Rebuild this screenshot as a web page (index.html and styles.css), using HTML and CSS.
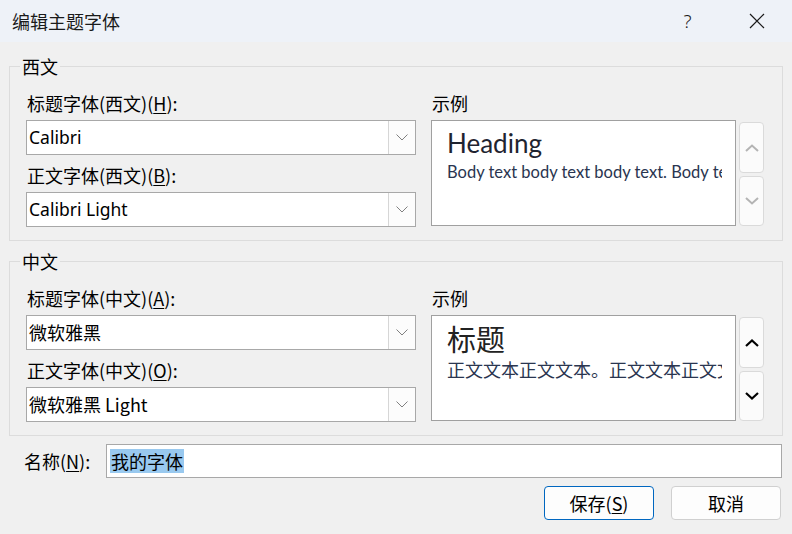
FILE: index.html
```html
<!DOCTYPE html>
<html lang="zh-CN">
<head>
  <meta charset="UTF-8">
  <meta name="viewport" content="width=device-width, initial-scale=1.0">
  <link rel="stylesheet" href="styles.css">
  <title>编辑主题字体</title>
</head>
<body>
  <div class="dialog">
    <div class="titlebar">
      <div class="title">编辑主题字体</div>
      <div class="caption-btn help">?</div>
      <div class="caption-btn close">
        <svg width="16" height="16" viewBox="0 0 16 16"><path d="M1 1 L15 15 M15 1 L1 15" stroke="#1a1a1a" stroke-width="1.2" fill="none"/></svg>
      </div>
    </div>

    <fieldset class="group">
      <legend>西文</legend>
      <div class="fields">
        <div class="field">
          <div class="label">标题字体(西文)(<u>H</u>):</div>
          <div class="combo">
            <div class="combo-text latin">Calibri</div>
            <div class="combo-btn"><svg width="12" height="7" viewBox="0 0 12 7"><path d="M0.5 0.5 L6 6 L11.5 0.5" stroke="#808080" stroke-width="1" fill="none"/></svg></div>
          </div>
        </div>
        <div class="field">
          <div class="label">正文字体(西文)(<u>B</u>):</div>
          <div class="combo">
            <div class="combo-text latin">Calibri Light</div>
            <div class="combo-btn"><svg width="12" height="7" viewBox="0 0 12 7"><path d="M0.5 0.5 L6 6 L11.5 0.5" stroke="#808080" stroke-width="1" fill="none"/></svg></div>
          </div>
        </div>
      </div>
      <div class="sample">
        <div class="label">示例</div>
        <div class="sample-row">
          <div class="preview">
            <div class="pv-head latin-head">Heading</div>
            <div class="pv-body latin-body">Body text body text body text. Body text body text.</div>
          </div>
          <div class="spin">
            <div class="spin-btn"><svg width="14" height="8" viewBox="0 0 14 8"><path d="M1 7 L7 1.5 L13 7" stroke="#b4b4b4" stroke-width="2" fill="none"/></svg></div>
            <div class="spin-btn"><svg width="14" height="8" viewBox="0 0 14 8"><path d="M1 1 L7 6.5 L13 1" stroke="#b4b4b4" stroke-width="2" fill="none"/></svg></div>
          </div>
        </div>
      </div>
    </fieldset>

    <fieldset class="group group-cn">
      <legend>中文</legend>
      <div class="fields">
        <div class="field">
          <div class="label">标题字体(中文)(<u>A</u>):</div>
          <div class="combo">
            <div class="combo-text">微软雅黑</div>
            <div class="combo-btn"><svg width="12" height="7" viewBox="0 0 12 7"><path d="M0.5 0.5 L6 6 L11.5 0.5" stroke="#808080" stroke-width="1" fill="none"/></svg></div>
          </div>
        </div>
        <div class="field">
          <div class="label">正文字体(中文)(<u>O</u>):</div>
          <div class="combo">
            <div class="combo-text">微软雅黑 Light</div>
            <div class="combo-btn"><svg width="12" height="7" viewBox="0 0 12 7"><path d="M0.5 0.5 L6 6 L11.5 0.5" stroke="#808080" stroke-width="1" fill="none"/></svg></div>
          </div>
        </div>
      </div>
      <div class="sample">
        <div class="label">示例</div>
        <div class="sample-row">
          <div class="preview">
            <div class="pv-head cn-head">标题</div>
            <div class="pv-body cn-body">正文文本正文文本。正文文本正文文本。</div>
          </div>
          <div class="spin">
            <div class="spin-btn"><svg width="14" height="8" viewBox="0 0 14 8"><path d="M1 7 L7 1.5 L13 7" stroke="#000" stroke-width="2.2" fill="none"/></svg></div>
            <div class="spin-btn"><svg width="14" height="8" viewBox="0 0 14 8"><path d="M1 1 L7 6.5 L13 1" stroke="#000" stroke-width="2.2" fill="none"/></svg></div>
          </div>
        </div>
      </div>
    </fieldset>

    <div class="name-row">
      <div class="name-label">名称(<u>N</u>):</div>
      <div class="name-input"><span class="selected">我的字体</span></div>
    </div>

    <div class="buttons">
      <div class="btn btn-default">保存(<u>S</u>)</div>
      <div class="btn">取消</div>
    </div>
  </div>
</body>
</html>
```

FILE: styles.css
```css
* {
  margin: 0;
  padding: 0;
  box-sizing: border-box;
}

body {
  background-color: #f0f0f0;
  font-family: "Noto Sans CJK SC", sans-serif;
  font-size: 18px;
  color: #000;
}

.dialog {
  width: 792px;
  height: 534px;
  overflow: hidden;
}

u {
  text-decoration-thickness: 1px;
  text-underline-offset: 2px;
}

/* title bar */
.titlebar {
  display: flex;
  align-items: center;
  height: 42px;
  background-color: #eef2f8;
}

.title {
  flex: 1;
  padding-left: 12px;
  line-height: 24px;
  color: #1a1a1a;
}

.caption-btn {
  width: 70px;
  height: 42px;
  display: flex;
  align-items: center;
  justify-content: center;
  color: #1a1a1a;
}

.help {
  font-family: "Noto Sans", sans-serif;
  font-weight: 300;
  font-size: 19px;
  padding-left: 1px;
}

.close {
  padding-right: 1px;
}

/* groups */
.group {
  margin: 12px 9px 0 9px;
  border: 1px solid #dcdcdc;
  padding: 13px 18px 13px 16px;
  display: grid;
  grid-template-columns: 390px 333px;
  column-gap: 15px;
}

.group-cn {
  margin-top: 8px;
}

legend {
  margin-left: -6px;
  padding: 0 2px;
  line-height: 24px;
  font-size: 18px;
}

.fields {
  display: flex;
  flex-direction: column;
  gap: 8px;
}

.label {
  line-height: 24px;
  margin-bottom: 5px;
  padding-left: 1px;
  white-space: nowrap;
}

.combo {
  display: flex;
  height: 35px;
  border: 1px solid #a8a8a8;
  background-color: #fff;
}

.combo-text {
  flex: 1;
  padding-left: 2px;
  line-height: 33px;
  white-space: nowrap;
}

.combo-text.latin {
  font-family: "Noto Sans", sans-serif;
  font-size: 17.5px;
}

.combo-btn {
  width: 27px;
  display: flex;
  align-items: center;
  justify-content: center;
  background-color: #fcfcfc;
  border-left: 1px solid #d6d6d6;
}

/* sample preview */
.sample-row {
  display: flex;
  gap: 3px;
}

.preview {
  width: 305px;
  height: 106px;
  border: 1px solid #a0a0a0;
  background-color: #fff;
  padding: 6px 13px 0 15px;
  overflow: hidden;
}

.pv-head,
.pv-body {
  white-space: nowrap;
  overflow: hidden;
}

.latin-head {
  font-family: Lato, sans-serif;
  font-size: 26px;
  line-height: 32px;
  color: #1f2430;
}

.latin-body {
  font-family: Lato, sans-serif;
  font-size: 16.5px;
  line-height: 20px;
  margin-top: 3px;
  color: #2a3550;
}

.cn-head {
  font-size: 29px;
  line-height: 34px;
  color: #222;
  margin-top: -1px;
}

.cn-body {
  font-size: 18px;
  line-height: 22px;
  margin-top: 3px;
  color: #2a3650;
}

.spin {
  display: flex;
  flex-direction: column;
  gap: 3px;
  padding-top: 2px;
}

.spin-btn {
  width: 25px;
  height: 51px;
  display: flex;
  align-items: center;
  justify-content: center;
  border: 1px solid #dadada;
  border-radius: 4px;
  background-color: #fbfbfb;
}

.spin-btn + .spin-btn {
  height: 50px;
}

/* name */
.name-row {
  display: flex;
  align-items: center;
  margin: 8px 10px 0 24px;
}

.name-label {
  width: 82px;
  line-height: 24px;
}

.name-input {
  flex: 1;
  height: 34px;
  border: 1px solid #a8a8a8;
  background-color: #fff;
  padding: 3px 0 0 3px;
}

.selected {
  display: inline-block;
  line-height: 24px;
  padding: 0 1px;
  background-color: #99c9ef;
}

/* buttons */
.buttons {
  display: flex;
  justify-content: flex-end;
  gap: 17px;
  margin: 8px 11px 0 0;
}

.btn {
  width: 110px;
  height: 34px;
  border: 1px solid #d0d0d0;
  border-radius: 4px;
  background-color: #fdfdfd;
  text-align: center;
  line-height: 32px;
}

.btn-default {
  border-color: #0067c0;
}
```
